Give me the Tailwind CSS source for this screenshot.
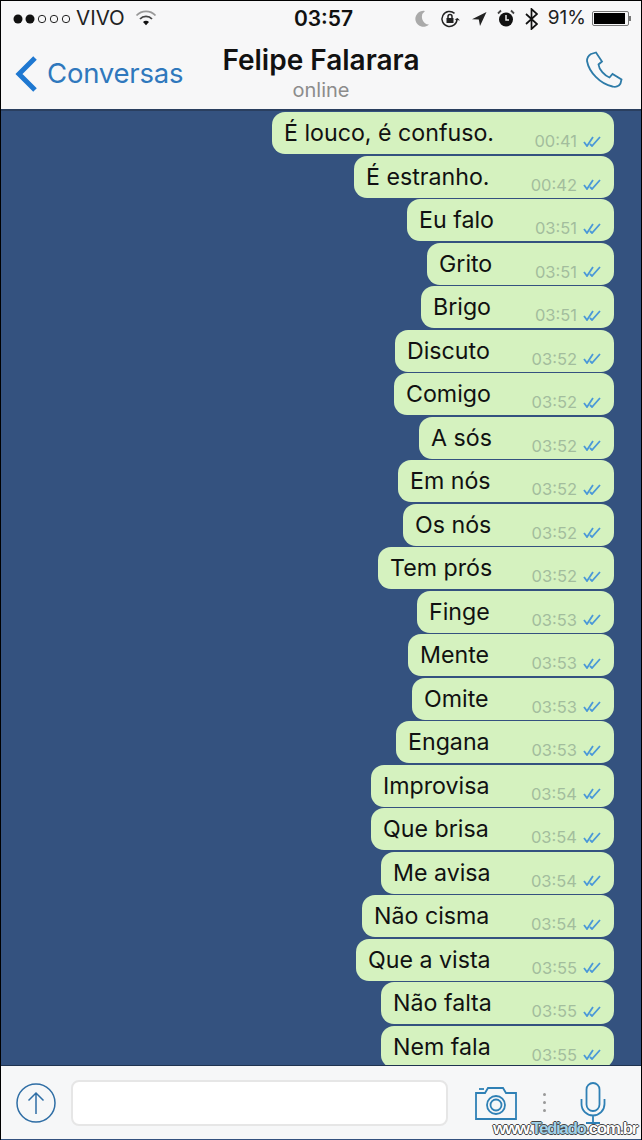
<!DOCTYPE html>
<html><head><meta charset="utf-8"><script src="https://cdn.jsdelivr.net/npm/@tailwindcss/browser@4"></script></head>
<body class="m-0">
<div class="relative w-[642px] h-[1140px] overflow-hidden bg-[#34527f] flex flex-col border-t border-l border-r border-black font-['Inter','Liberation_Sans',sans-serif] text-[#111]">
  <!-- header -->
  <header class="h-[110px] shrink-0 bg-[#f7f7f8] border-b-2 border-[#2a3f5f] relative">
    <div class="h-[35px] flex items-center pl-[12px] pr-[10px] text-[18px] justify-between">
      <div class="flex items-center w-[223px]">
        <svg width="60" height="12" viewBox="0 0 60 12" class="mr-[4px]"><circle cx="5" cy="6" r="4.5" fill="#111"/><circle cx="17" cy="6" r="4.5" fill="#111"/><circle cx="29" cy="6" r="3.700" fill="none" stroke="#222"/><circle cx="41" cy="6" r="3.700" fill="none" stroke="#222"/><circle cx="53" cy="6" r="3.700" fill="none" stroke="#222"/></svg>
        <span class="ml-[-1px] text-[#222] text-[20.500px]">VIVO</span>
        <svg width="22" height="16" viewBox="0 0 22 16" class="ml-[10px] mb-[2px]" fill="none" stroke="#444"><path d="M1.500 5.500a13 13 0 0 1 19 0" stroke-width="1.800" stroke="#999"/><path d="M5 9a8 8 0 0 1 12 0" stroke-width="1.800"/><path d="M8 12l3 3.300 3-3.300a4 4 0 0 0-6 0z" fill="#111" stroke="none"/></svg>
      </div>
      <span class="font-semibold text-[21px]">03:57</span>
      <div class="flex items-center w-[220px] justify-end gap-[10px] text-[#222]">
        <svg width="16" height="17" viewBox="0 0 16 17"><path d="M11 1a8 8 0 1 0 4 13.500A7.500 7.500 0 0 1 11 1z" fill="#aaa"/></svg>
        <svg width="21" height="18" viewBox="0 0 21 18" fill="none" stroke="#222" stroke-width="1.500"><path d="M17 9a7.500 7.500 0 1 1-2.500-5.600"/><path d="M14.500 9.500l3-1.500 2.500 2.500" fill="#222" stroke="none"/><rect x="6.500" y="8" width="7" height="5" fill="#222" stroke="none"/><path d="M8 8V6.500a2 2 0 0 1 4 0V8"/></svg>
        <svg width="16" height="16" viewBox="0 0 16 16"><path d="M15.500 1L1 8.200l6.800.4L9 15z" fill="#222"/></svg>
        <svg width="18" height="19" viewBox="0 0 18 19"><circle cx="9" cy="10.500" r="7" fill="#111"/><path d="M9 6v5h3" stroke="#eee" stroke-width="1.500" fill="none"/><path d="M1 4.500L4 1.500M17 4.500L14 1.500" stroke="#444" stroke-width="1.800"/></svg>
        <svg width="13" height="22" viewBox="0 0 13 22" fill="none" stroke="#111" stroke-width="1.700"><path d="M1 6l11 10-5.500 5V1L12 6 1 16"/></svg>
        <span class="text-[19px]">91%</span>
        <div class="flex items-center ml-[-4px]"><div class="w-[37px] h-[15px] border border-[#777] rounded-[2px] p-[1px]"><div class="w-[31px] h-full bg-black"></div></div><div class="w-[2px] h-[5px] bg-[#777]"></div></div>
      </div>
    </div>
    <div class="relative h-[73px]">
      <div class="absolute left-[13px] top-[17px] flex items-center">
        <svg width="24" height="38" viewBox="0 0 24 38" fill="none" stroke="#1f78d1" stroke-width="5"><path d="M21 3L5 19l16 16"/></svg>
        <span class="text-[#2f78bd] text-[27.500px] ml-[9px] tracking-[-0.2px]">Conversas</span>
      </div>
      <div class="flex flex-col items-center pt-[6px]">
        <span class="font-semibold text-[28px] leading-[36px] text-[#111]">Felipe Falarara</span>
        <span class="text-[#8c8c8c] text-[20px] leading-[25px]">online</span>
      </div>
      <svg class="absolute right-[15px] top-[15px]" width="40" height="40" viewBox="0 0 40 40" fill="none" stroke="#2d7ba8" stroke-width="1.800"><path d="M5 3l5-1.500 6 9-3.500 3c.5 5 6 11 11 13l3-3.500 9 5.500-1 4c-1.500 3-5 4-8 3C14 33 3 21 1 10c0-3 1.500-5.500 4-7z"/></svg>
    </div>
  </header>
  <!-- messages -->
  <main class="flex-1 min-h-0 overflow-hidden flex flex-col items-end pr-[27px] pt-[1px] gap-[1.500px] text-[23.200px]">
    <div class="w-[342px] h-[42px] shrink-0 bg-[#d5f2bf] rounded-[13px] flex items-start justify-between pl-[12px] pr-[13px]"><span class="leading-[42px]">É louco, é confuso.</span><span class="flex items-center gap-[6px] text-[16.500px] text-[#a3bd9d] leading-[20px] mt-[19px]">00:41<svg width="18" height="11" viewBox="0 0 18 11" fill="none" stroke="#4a98d8" stroke-width="1.800"><path d="M1 6l3 4 6-9M7 8l2 2 8-9"/></svg></span></div>
    <div class="w-[260px] h-[42px] shrink-0 bg-[#d5f2bf] rounded-[13px] flex items-start justify-between pl-[12px] pr-[13px]"><span class="leading-[42px]">É estranho.</span><span class="flex items-center gap-[6px] text-[16.500px] text-[#a3bd9d] leading-[20px] mt-[19px]">00:42<svg width="18" height="11" viewBox="0 0 18 11" fill="none" stroke="#4a98d8" stroke-width="1.800"><path d="M1 6l3 4 6-9M7 8l2 2 8-9"/></svg></span></div>
    <div class="w-[207px] h-[42px] shrink-0 bg-[#d5f2bf] rounded-[13px] flex items-start justify-between pl-[12px] pr-[13px]"><span class="leading-[42px]">Eu falo</span><span class="flex items-center gap-[6px] text-[16.500px] text-[#a3bd9d] leading-[20px] mt-[19px]">03:51<svg width="18" height="11" viewBox="0 0 18 11" fill="none" stroke="#4a98d8" stroke-width="1.800"><path d="M1 6l3 4 6-9M7 8l2 2 8-9"/></svg></span></div>
    <div class="w-[187px] h-[42px] shrink-0 bg-[#d5f2bf] rounded-[13px] flex items-start justify-between pl-[12px] pr-[13px]"><span class="leading-[42px]">Grito</span><span class="flex items-center gap-[6px] text-[16.500px] text-[#a3bd9d] leading-[20px] mt-[19px]">03:51<svg width="18" height="11" viewBox="0 0 18 11" fill="none" stroke="#4a98d8" stroke-width="1.800"><path d="M1 6l3 4 6-9M7 8l2 2 8-9"/></svg></span></div>
    <div class="w-[193px] h-[42px] shrink-0 bg-[#d5f2bf] rounded-[13px] flex items-start justify-between pl-[12px] pr-[13px]"><span class="leading-[42px]">Brigo</span><span class="flex items-center gap-[6px] text-[16.500px] text-[#a3bd9d] leading-[20px] mt-[19px]">03:51<svg width="18" height="11" viewBox="0 0 18 11" fill="none" stroke="#4a98d8" stroke-width="1.800"><path d="M1 6l3 4 6-9M7 8l2 2 8-9"/></svg></span></div>
    <div class="w-[219px] h-[42px] shrink-0 bg-[#d5f2bf] rounded-[13px] flex items-start justify-between pl-[12px] pr-[13px]"><span class="leading-[42px]">Discuto</span><span class="flex items-center gap-[6px] text-[16.500px] text-[#a3bd9d] leading-[20px] mt-[19px]">03:52<svg width="18" height="11" viewBox="0 0 18 11" fill="none" stroke="#4a98d8" stroke-width="1.800"><path d="M1 6l3 4 6-9M7 8l2 2 8-9"/></svg></span></div>
    <div class="w-[220px] h-[42px] shrink-0 bg-[#d5f2bf] rounded-[13px] flex items-start justify-between pl-[12px] pr-[13px]"><span class="leading-[42px]">Comigo</span><span class="flex items-center gap-[6px] text-[16.500px] text-[#a3bd9d] leading-[20px] mt-[19px]">03:52<svg width="18" height="11" viewBox="0 0 18 11" fill="none" stroke="#4a98d8" stroke-width="1.800"><path d="M1 6l3 4 6-9M7 8l2 2 8-9"/></svg></span></div>
    <div class="w-[195px] h-[42px] shrink-0 bg-[#d5f2bf] rounded-[13px] flex items-start justify-between pl-[12px] pr-[13px]"><span class="leading-[42px]">A sós</span><span class="flex items-center gap-[6px] text-[16.500px] text-[#a3bd9d] leading-[20px] mt-[19px]">03:52<svg width="18" height="11" viewBox="0 0 18 11" fill="none" stroke="#4a98d8" stroke-width="1.800"><path d="M1 6l3 4 6-9M7 8l2 2 8-9"/></svg></span></div>
    <div class="w-[216px] h-[42px] shrink-0 bg-[#d5f2bf] rounded-[13px] flex items-start justify-between pl-[12px] pr-[13px]"><span class="leading-[42px]">Em nós</span><span class="flex items-center gap-[6px] text-[16.500px] text-[#a3bd9d] leading-[20px] mt-[19px]">03:52<svg width="18" height="11" viewBox="0 0 18 11" fill="none" stroke="#4a98d8" stroke-width="1.800"><path d="M1 6l3 4 6-9M7 8l2 2 8-9"/></svg></span></div>
    <div class="w-[211px] h-[42px] shrink-0 bg-[#d5f2bf] rounded-[13px] flex items-start justify-between pl-[12px] pr-[13px]"><span class="leading-[42px]">Os nós</span><span class="flex items-center gap-[6px] text-[16.500px] text-[#a3bd9d] leading-[20px] mt-[19px]">03:52<svg width="18" height="11" viewBox="0 0 18 11" fill="none" stroke="#4a98d8" stroke-width="1.800"><path d="M1 6l3 4 6-9M7 8l2 2 8-9"/></svg></span></div>
    <div class="w-[236px] h-[42px] shrink-0 bg-[#d5f2bf] rounded-[13px] flex items-start justify-between pl-[12px] pr-[13px]"><span class="leading-[42px]">Tem prós</span><span class="flex items-center gap-[6px] text-[16.500px] text-[#a3bd9d] leading-[20px] mt-[19px]">03:52<svg width="18" height="11" viewBox="0 0 18 11" fill="none" stroke="#4a98d8" stroke-width="1.800"><path d="M1 6l3 4 6-9M7 8l2 2 8-9"/></svg></span></div>
    <div class="w-[197px] h-[42px] shrink-0 bg-[#d5f2bf] rounded-[13px] flex items-start justify-between pl-[12px] pr-[13px]"><span class="leading-[42px]">Finge</span><span class="flex items-center gap-[6px] text-[16.500px] text-[#a3bd9d] leading-[20px] mt-[19px]">03:53<svg width="18" height="11" viewBox="0 0 18 11" fill="none" stroke="#4a98d8" stroke-width="1.800"><path d="M1 6l3 4 6-9M7 8l2 2 8-9"/></svg></span></div>
    <div class="w-[206px] h-[42px] shrink-0 bg-[#d5f2bf] rounded-[13px] flex items-start justify-between pl-[12px] pr-[13px]"><span class="leading-[42px]">Mente</span><span class="flex items-center gap-[6px] text-[16.500px] text-[#a3bd9d] leading-[20px] mt-[19px]">03:53<svg width="18" height="11" viewBox="0 0 18 11" fill="none" stroke="#4a98d8" stroke-width="1.800"><path d="M1 6l3 4 6-9M7 8l2 2 8-9"/></svg></span></div>
    <div class="w-[202px] h-[42px] shrink-0 bg-[#d5f2bf] rounded-[13px] flex items-start justify-between pl-[12px] pr-[13px]"><span class="leading-[42px]">Omite</span><span class="flex items-center gap-[6px] text-[16.500px] text-[#a3bd9d] leading-[20px] mt-[19px]">03:53<svg width="18" height="11" viewBox="0 0 18 11" fill="none" stroke="#4a98d8" stroke-width="1.800"><path d="M1 6l3 4 6-9M7 8l2 2 8-9"/></svg></span></div>
    <div class="w-[218px] h-[42px] shrink-0 bg-[#d5f2bf] rounded-[13px] flex items-start justify-between pl-[12px] pr-[13px]"><span class="leading-[42px]">Engana</span><span class="flex items-center gap-[6px] text-[16.500px] text-[#a3bd9d] leading-[20px] mt-[19px]">03:53<svg width="18" height="11" viewBox="0 0 18 11" fill="none" stroke="#4a98d8" stroke-width="1.800"><path d="M1 6l3 4 6-9M7 8l2 2 8-9"/></svg></span></div>
    <div class="w-[243px] h-[42px] shrink-0 bg-[#d5f2bf] rounded-[13px] flex items-start justify-between pl-[12px] pr-[13px]"><span class="leading-[42px]">Improvisa</span><span class="flex items-center gap-[6px] text-[16.500px] text-[#a3bd9d] leading-[20px] mt-[19px]">03:54<svg width="18" height="11" viewBox="0 0 18 11" fill="none" stroke="#4a98d8" stroke-width="1.800"><path d="M1 6l3 4 6-9M7 8l2 2 8-9"/></svg></span></div>
    <div class="w-[243px] h-[42px] shrink-0 bg-[#d5f2bf] rounded-[13px] flex items-start justify-between pl-[12px] pr-[13px]"><span class="leading-[42px]">Que brisa</span><span class="flex items-center gap-[6px] text-[16.500px] text-[#a3bd9d] leading-[20px] mt-[19px]">03:54<svg width="18" height="11" viewBox="0 0 18 11" fill="none" stroke="#4a98d8" stroke-width="1.800"><path d="M1 6l3 4 6-9M7 8l2 2 8-9"/></svg></span></div>
    <div class="w-[233px] h-[42px] shrink-0 bg-[#d5f2bf] rounded-[13px] flex items-start justify-between pl-[12px] pr-[13px]"><span class="leading-[42px]">Me avisa</span><span class="flex items-center gap-[6px] text-[16.500px] text-[#a3bd9d] leading-[20px] mt-[19px]">03:54<svg width="18" height="11" viewBox="0 0 18 11" fill="none" stroke="#4a98d8" stroke-width="1.800"><path d="M1 6l3 4 6-9M7 8l2 2 8-9"/></svg></span></div>
    <div class="w-[252px] h-[42px] shrink-0 bg-[#d5f2bf] rounded-[13px] flex items-start justify-between pl-[12px] pr-[13px]"><span class="leading-[42px]">Não cisma</span><span class="flex items-center gap-[6px] text-[16.500px] text-[#a3bd9d] leading-[20px] mt-[19px]">03:54<svg width="18" height="11" viewBox="0 0 18 11" fill="none" stroke="#4a98d8" stroke-width="1.800"><path d="M1 6l3 4 6-9M7 8l2 2 8-9"/></svg></span></div>
    <div class="w-[258px] h-[42px] shrink-0 bg-[#d5f2bf] rounded-[13px] flex items-start justify-between pl-[12px] pr-[13px]"><span class="leading-[42px]">Que a vista</span><span class="flex items-center gap-[6px] text-[16.500px] text-[#a3bd9d] leading-[20px] mt-[19px]">03:55<svg width="18" height="11" viewBox="0 0 18 11" fill="none" stroke="#4a98d8" stroke-width="1.800"><path d="M1 6l3 4 6-9M7 8l2 2 8-9"/></svg></span></div>
    <div class="w-[233px] h-[42px] shrink-0 bg-[#d5f2bf] rounded-[13px] flex items-start justify-between pl-[12px] pr-[13px]"><span class="leading-[42px]">Não falta</span><span class="flex items-center gap-[6px] text-[16.500px] text-[#a3bd9d] leading-[20px] mt-[19px]">03:55<svg width="18" height="11" viewBox="0 0 18 11" fill="none" stroke="#4a98d8" stroke-width="1.800"><path d="M1 6l3 4 6-9M7 8l2 2 8-9"/></svg></span></div>
    <div class="w-[233px] h-[42px] shrink-0 bg-[#d5f2bf] rounded-[13px] flex items-start justify-between pl-[12px] pr-[13px]"><span class="leading-[42px]">Nem fala</span><span class="flex items-center gap-[6px] text-[16.500px] text-[#a3bd9d] leading-[20px] mt-[19px]">03:55<svg width="18" height="11" viewBox="0 0 18 11" fill="none" stroke="#4a98d8" stroke-width="1.800"><path d="M1 6l3 4 6-9M7 8l2 2 8-9"/></svg></span></div>
  </main>
  <!-- input bar -->
  <footer class="h-[74px] shrink-0 bg-[#f6f7f8] border-t border-[#1f3350] flex items-center pl-[15px] mb-[1px]">
    <svg width="40" height="40" viewBox="0 0 40 40" fill="none" stroke="#2f6ea5" stroke-width="1.500"><circle cx="20" cy="20" r="19"/><path d="M20 31V10M12.500 17.500L20 10l7.500 7.500"/></svg>
    <div class="w-[377px] h-[46px] ml-[15px] bg-white rounded-[8px] border-2 border-[#e6e6e6]"></div>
    <svg class="ml-[26px]" width="44" height="34" viewBox="0 0 44 34" fill="none" stroke="#2f80b5" stroke-width="1.800"><path d="M2 7h9l3-5h15l3 5h10v26H2z"/><circle cx="22" cy="19" r="9"/><circle cx="22" cy="19" r="5.500"/><path d="M5 3h5"/></svg>
    <div class="flex flex-col gap-[5px] ml-[25px]"><div class="w-[3px] h-[3px] rounded-full bg-[#999]"></div><div class="w-[3px] h-[3px] rounded-full bg-[#999]"></div><div class="w-[3px] h-[3px] rounded-full bg-[#999]"></div></div>
    <svg class="ml-[34px]" width="26" height="42" viewBox="0 0 26 42" fill="none" stroke="#2f80b5" stroke-width="1.800"><rect x="6.500" y="1" width="13" height="28" rx="6.500"/><path d="M1.500 17v5a11.500 11.500 0 0 0 23 0v-5M13 33.500V41M6 41h14"/></svg>
  </footer>
  <div class="absolute right-[4px] bottom-[1px] font-['Liberation_Sans',sans-serif] font-bold text-[17px] leading-[20px] tracking-[-1.400px] text-white [text-shadow:-1px_0_#444,1px_0_#444,0_-1px_#444,0_1px_#444]">www.<span class="text-[#9fd0e8]">Tediado</span>.com.br</div>
</div>
</body></html>
